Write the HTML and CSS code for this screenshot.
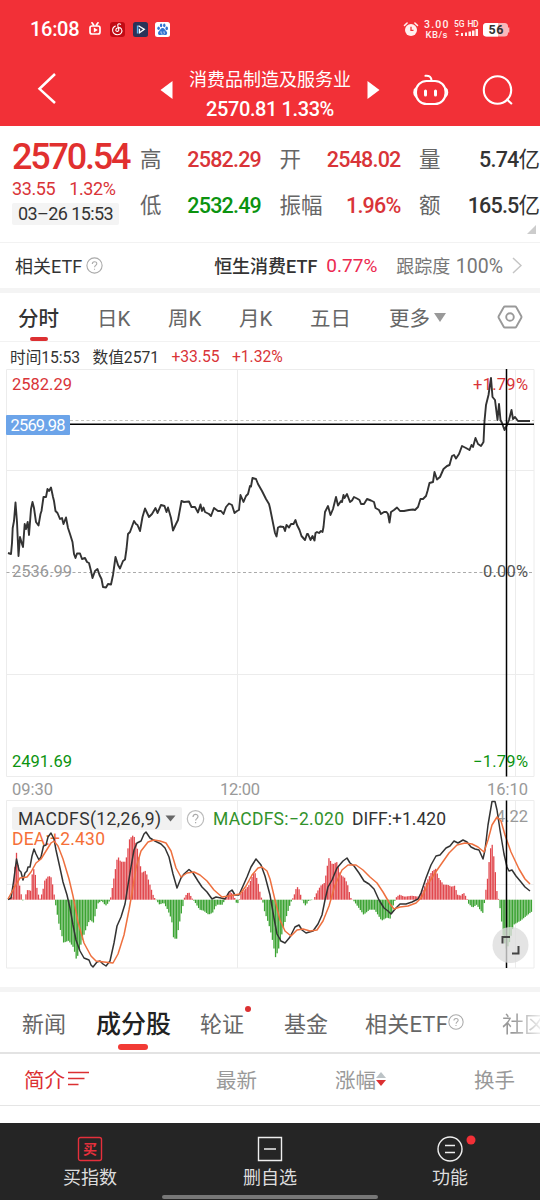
FILE: index.html
```html
<!DOCTYPE html>
<html lang="zh-CN">
<head>
<meta charset="utf-8">
<title>消费品制造及服务业</title>
<link rel="stylesheet" href="styles.css">
</head>
<body>
<main class="app">
  <header class="top">
    <div class="status">
      <span class="clock">16:08</span>
      <svg class="status-apps" width="90" height="18" viewBox="86 20 90 18">
        <g fill="none" stroke="#fff" stroke-width="1.7" stroke-linecap="round"><rect x="90" y="26" width="10" height="8" rx="2"/><path d="M92 22.8l1.6 2.2M98 22.8l-1.6 2.2"/></g>
        <path d="M93.8 27.6l4 2.4-4 2.4z" fill="#fff"/>
        <rect x="110" y="22" width="15" height="15" rx="3" fill="#c20b14"/>
        <path d="M120.6 24.2c-2-1-3.2 0-2.8 1.5l1 4.2c.3 1.8-3 2.2-3 0 0-2 3.7-3.3 5.4-1.2 2 2.8-.2 6-3.6 6-3.2 0-5-2.2-5-4.6 0-2 1.1-3.3 2.8-4" fill="none" stroke="#fff" stroke-width="1.1" stroke-linecap="round"/>
        <rect x="133" y="22" width="15" height="15" rx="2.5" fill="#2b3358"/>
        <path d="M137.6 25.5v8" stroke="#58b5f2" stroke-width="1.5"/><path d="M138.500 25.800l5.800 3.600-4.800 3.400v-4" fill="none" stroke="#fff" stroke-width="1.3"/>
        <rect x="155" y="22" width="15" height="15" rx="2.5" fill="#fff"/>
        <g fill="#3174d2"><ellipse cx="158.6" cy="28.2" rx="1.3" ry="1.8"/><ellipse cx="161.1" cy="25.4" rx="1.2" ry="1.8"/><ellipse cx="164.3" cy="25.4" rx="1.2" ry="1.8"/><ellipse cx="166.7" cy="28.4" rx="1.3" ry="1.8"/><path d="M162.6 28c2 0 2.3 2 3.7 3.2 1.7 1.6.7 4.2-1.5 3.7-1.5-.2-3-.2-4.4 0-2.300.5-3.200-2.100-1.500-3.700 1.400-1.200 1.700-3.200 3.700-3.200z"/></g>
        <path d="M161 31.200v2h1.300M164 31.200v2h1" fill="none" stroke="#fff" stroke-width=".6"/>
      </svg>
      <svg class="status-system" width="110" height="24" viewBox="402 17 110 24">
        <circle cx="411" cy="30" r="6" fill="#fff0ef"/><path d="M411 26.800v3.600h2.500" fill="none" stroke="#f23037" stroke-width="1.300"/><path d="M404.500 25.500l2.600-2.500M417.500 25.500l-2.600-2.500" stroke="#fff0ef" stroke-width="1.600" stroke-linecap="round"/>
        <g class="tiny"><text x="424" y="28" textLength="24.500" font-size="10.500">3.00</text><text x="425.500" y="38" textLength="22" font-size="9.500">KB/s</text><text x="454" y="26.500" textLength="10.500" font-size="8.500">5G</text><text x="467.500" y="26.500" textLength="11" font-size="8.500">HD</text></g>
        <path d="M455 32l2-2 2 2zM455 34l2 2 2-2zM461 33h2v3h-2zM465 32.500h2V36h-2zM468.500 31.500h2.500V36h-2.500zM472 30.500h2.500V36H472zM475.500 29h2.500v7h-2.500z" fill="#fff0ef"/>
        <rect x="483" y="23" width="25" height="13.500" rx="3.500" fill="#f9b9ba"/><path d="M486.500 23H498v13.500h-11.500a3.500 3.500 0 0 1-3.500-3.500v-6.500a3.500 3.500 0 0 1 3.500-3.500z" fill="#fff"/><path d="M508.600 27.500v5" stroke="#f9b9ba" stroke-width="1.500"/>
        <text class="battery" x="488.500" y="34.300" textLength="15" font-size="12.500">56</text>
      </svg>
    </div>
    <nav class="titlebar">
      <svg width="160" height="50" viewBox="20 65 160 50"><path d="M55 74L39.500 88.800 55 103" fill="none" stroke="#fff" stroke-width="2.500"/><path d="M172.500 81v18L160.500 90z" fill="#fff"/></svg>
      <div class="title"><div class="title-name">消费品制造及服务业</div><div class="title-value">2570.81 1.33%</div></div>
      <svg width="160" height="50" viewBox="360 65 160 50"><path d="M367.500 81v18l12-9z" fill="#fff"/><g fill="none" stroke="#fff" stroke-width="2.100" stroke-linecap="round"><rect x="416" y="81" width="29.500" height="23" rx="10.500"/><path d="M416 88.500c-2.300 1.300-2.300 6.500 0 8M445.500 88.500c2.300 1.300 2.300 6.500 0 8M431.500 80.500c0-3.500-2-5-6-4.700"/><path d="M425.500 91v4M435.500 91v4" stroke-width="3"/><circle cx="497.500" cy="90" r="13.700"/><path d="M507 99.500l4.300 4"/></g></svg>
    </nav>
  </header>

  <section class="quote">
    <div class="quote-main">
      <div class="last">2570.54</div>
      <div class="change"><span>33.55</span><span>1.32%</span></div>
      <div class="stamp">03–26 15:53</div>
    </div>
    <dl class="stats">
      <div><dt>高</dt><dd class="up">2582.29</dd></div>
      <div><dt>开</dt><dd class="up">2548.02</dd></div>
      <div><dt>量</dt><dd>5.74<i>亿</i></dd></div>
      <div><dt>低</dt><dd class="down">2532.49</dd></div>
      <div><dt>振幅</dt><dd class="up">1.96%</dd></div>
      <div><dt>额</dt><dd>165.5<i>亿</i></dd></div>
    </dl>
    <span class="corner"></span>
  </section>

  <section class="etf">
    <span class="etf-label">相关ETF</span>
    <svg class="help" width="17" height="17" viewBox="0 0 17 17"><circle cx="8.500" cy="8.500" r="7.600"/><path d="M6.300 7c0-3 4.500-3 4.500-.3 0 1.700-2.200 1.800-2.200 3.600M8.500 11.700v1.100"/></svg>
    <span class="etf-name">恒生消费ETF</span><span class="etf-rate">0.77%</span><span class="etf-track">跟踪度 <b>100%</b></span>
    <svg class="chevron" width="10" height="17" viewBox="0 0 10 17"><path d="M1 1l8 7.500L1 16"/></svg>
  </section>

  <nav class="periods">
    <span class="on">分时</span><span>日K</span><span>周K</span><span>月K</span><span>五日</span><span class="more">更多</span>
    <svg class="gear" width="26" height="24" viewBox="0 0 26 24"><path d="M8 1.500h10a1.500 1.500 0 0 1 1.300.8L24.200 11a2 2 0 0 1 0 2l-4.900 8.700a1.500 1.500 0 0 1-1.300.8H8a1.500 1.500 0 0 1-1.300-.8L1.800 13a2 2 0 0 1 0-2l4.900-8.700A1.500 1.500 0 0 1 8 1.500z"/><circle cx="13" cy="12" r="3.800"/></svg>
  </nav>

  <div class="readout"><span>时间15:53</span><span>数值2571</span><span class="up">+33.55</span><span class="up">+1.32%</span></div>

  <svg class="chart" width="540" height="431" viewBox="0 369 540 431">
    <path class="grid" d="M6.500 369.500h527.500v407H6.500zM6.500 470.500h527.500M6.500 674.500h527.500M237.500 369.500v407M515.500 369.500v407"/>
    <path class="dash" d="M6.500 572.500h527.500"/><path class="dash dim" d="M70 420.500h464"/>
    <text class="red" x="12" y="390" textLength="60">2582.29</text>
    <text class="red" x="473" y="390" textLength="55">+1.79%</text>
    <text class="gray" x="12" y="577" textLength="60">2536.99</text>
    <text class="ink" x="483" y="577" textLength="45">0.00%</text>
    <text class="green" x="12" y="767" textLength="60">2491.69</text>
    <text class="green" x="473" y="767" textLength="55">−1.79%</text>
    <text class="gray" x="12" y="795" textLength="41">09:30</text>
    <text class="gray" x="220" y="795" textLength="40">12:00</text>
    <text class="gray" x="487" y="795" textLength="41">16:10</text>
    <path id="price" class="line price"/>
    <path class="cross" d="M70 424.300h464M506.500 369v407.500"/>
    <rect x="6" y="415" width="64" height="20" rx="1" fill="#6ca4e9"/>
    <text x="10.500" y="431" textLength="55" fill="#fff">2569.98</text>
  </svg>

  <svg class="macd" width="540" height="187" viewBox="0 800 540 187">
    <path class="grid" d="M6.500 800.500h527.500v167.500H6.500zM6.500 884.500h527.500M237.500 800.500v167.500M515.500 800.500v167.500"/>
    <g id="bars"></g>
    <rect x="12" y="807" width="170" height="23" rx="2" fill="#f1f1f1"/>
    <g class="legend">
      <text x="18" y="825" textLength="143" fill="#333">MACDFS(12,26,9)</text>
      <path d="M165.500 815.500h10l-5 6z" fill="#666"/>
      <circle cx="195.500" cy="818.800" r="8.200" fill="none" stroke="#bbb" stroke-width="1.200"/><path d="M193 817c0-3.500 5-3.500 5-.4 0 2-2.400 2-2.400 4M195.600 822v1.300" fill="none" stroke="#aaa" stroke-width="1.200"/>
      <text x="213" y="825" textLength="131" fill="#32922b">MACDFS:−2.020</text>
      <text x="352" y="825" textLength="94" fill="#333">DIFF:+1.420</text>
      <text x="12" y="845" textLength="93" fill="#f56f38">DEA:+2.430</text>
    </g>
    <text class="gray scale" x="496" y="822" textLength="32">4.22</text>
    <path id="diff" class="line"/><path id="dea" class="line dea"/>
    <path class="cross" d="M506.500 800.500v167.500"/>
    <circle cx="510.500" cy="945" r="18" fill="#ddd" fill-opacity=".78"/><path d="M502.500 943.500V937h7.500M512 953.500h6.500V946" fill="none" stroke="#444" stroke-width="2"/>
  </svg>

  <nav class="sections">
    <span>新闻</span><span class="on">成分股</span><span class="dot">轮证</span><span>基金</span><span class="with-help">相关ETF<svg class="help" width="16" height="16" viewBox="0 0 17 17"><circle cx="8.500" cy="8.500" r="7.600"/><path d="M6.300 7c0-3 4.500-3 4.500-.3 0 1.700-2.200 1.800-2.200 3.600M8.500 11.700v1.100"/></svg></span><span class="fade">社区</span>
  </nav>

  <div class="columns">
    <span class="intro">简介<svg width="22" height="16" viewBox="0 0 22 16"><path d="M0 1.500h21M0 7.500h16.500M0 13.500h10.500"/></svg></span>
    <span>最新</span>
    <span class="sort">涨幅<svg width="10" height="16" viewBox="0 0 10 16"><path d="M0 7l5-6 5 6z" fill="#bcc3c6"/><path d="M0 9h10l-5 6z" fill="#db3032"/></svg></span>
    <span>换手</span>
  </div>

  <footer class="bottom">
    <div><svg width="26" height="26" viewBox="0 0 26 26"><rect x="1.500" y="1.500" width="23" height="23" rx="2" fill="none" stroke="#e5303c" stroke-width="1.400"/><text x="6" y="18" font-size="14" font-weight="700" fill="#e5303c">买</text></svg><span>买指数</span></div>
    <div><svg width="26" height="26" viewBox="0 0 26 26"><path d="M1.500 1.500h23v23h-23zM7 13h12" fill="none" stroke="#eee" stroke-width="1.400"/></svg><span>删自选</span></div>
    <div><svg class="func" width="26" height="26" viewBox="0 0 26 26"><circle cx="13" cy="13" r="12" fill="none" stroke="#eee" stroke-width="1.400"/><path d="M8 9.500h10M8 16.500h10" stroke="#eee" stroke-width="1.400"/><circle cx="34" cy="4" r="4.500" fill="#f23037"/></svg><span>功能</span></div>
    <i class="home"></i>
  </footer>
</main>
<script src="chart.js"></script>
</body>
</html>
```
FILE: styles.css
```css
* { box-sizing: border-box; }
body { margin: 0; background: #fff; color: #333; font-family: Roboto, "Noto Sans CJK SC", sans-serif; }
.app { width: 540px; height: 1200px; display: flex; flex-direction: column; overflow: hidden; }
.app > * { flex: none; }
svg { display: block; flex: none; }
span, dt, dd, .title, .last, .change, .stamp { white-space: nowrap; }
.up { color: #d93438; }
.down { color: #0b930f; }

.top { height: 126px; background: #f23037; color: #fff; }
.status { height: 60px; display: flex; align-items: center; padding: 0 28px 0 30px; }
.clock { width: 56px; font-size: 20px; font-weight: 500; letter-spacing: -.3px; margin-top: -2px; }
.status-apps { margin-top: -2px; }
.status-system { margin-left: auto; margin-top: -2px; }
.tiny { fill: #fff0ef; font-weight: 500; }
.battery { fill: #333; font-weight: 700; }
.titlebar { height: 66px; display: flex; justify-content: space-between; align-items: flex-start; padding: 5px 20px 0; }
.title { text-align: center; padding-top: 3px; }
.title-name { font-size: 18px; line-height: 24px; }
.title-value { font-size: 20px; line-height: 24px; margin-top: 5px; letter-spacing: -.4px; font-weight: 500; }

.quote { position: relative; height: 117px; display: flex; border-bottom: 1px solid #f2f2f2; }
.quote-main { width: 140px; padding: 12px 0 0 12px; }
.last { font-size: 36px; line-height: 38px; font-weight: 500; letter-spacing: -2.200px; color: #e1302f; }
.change { display: flex; gap: 14px; margin-top: 3px; font-size: 18px; line-height: 20px; letter-spacing: -.4px; color: #d93438; }
.stamp { width: 107px; height: 22px; margin-top: 4px; background: #f4f4f4; font-size: 18px; line-height: 22px; text-align: center; letter-spacing: -.6px; border-radius: 2px; }
.stats { display: grid; grid-template-columns: 121px 121px 121px; grid-template-rows: 46px 46px; column-gap: 18.500px; margin: 11px 0 0; }
.stats div { display: flex; justify-content: space-between; align-items: center; }
.stats dt { font-size: 21.500px; line-height: 30px; margin-top: -1px; color: #666; }
.stats dd { margin: 0; font-size: 21.500px; line-height: 30px; font-weight: 500; letter-spacing: -.8px; }
.stats i { font-style: normal; font-size: 21.500px; letter-spacing: 0; font-weight: 400; }
.corner { position: absolute; right: 4px; bottom: 8px; border-left: 9px solid transparent; border-bottom: 9px solid #ccc; }

.etf { height: 50px; display: flex; align-items: center; padding: 0 18px 0 15px; border-bottom: 5px solid #f4f4f4; font-size: 18px; }
.etf span { margin-top: -1px; }
.etf-label { width: 71px; }
.help { fill: none; stroke: #aaa; stroke-width: 1.100; }
.etf .etf-name { margin-left: auto; font-weight: 500; }
.etf-rate { width: 53px; margin-left: 9px; color: #ec2950; font-size: 19px; }
.etf-track { margin-left: 17px; color: #777; }
.etf-track b { font-weight: 400; font-size: 19.500px; margin-left: 1px; }
.chevron { margin-left: 9px; fill: none; stroke: #c5c5c5; stroke-width: 1.500; }

.periods { height: 49px; display: grid; grid-template-columns: 79px 71px 71px 71px 79px 108px 26px; align-items: center; padding-left: 18px; border-bottom: 1px solid #f2f2f2; color: #666; font-size: 20.500px; }
.periods span { position: relative; }
.periods .on { color: #333; font-weight: 500; }
.periods .on::after { content: ""; position: absolute; left: 12px; bottom: -9px; width: 18px; height: 4px; border-radius: 3px; background: #dc3032; }
.more { display: flex; align-items: center; gap: 4px; }
.more::after { content: ""; border: 6px solid transparent; border-top: 9px solid #999; border-bottom: 0; }
.gear { fill: none; stroke: #999; stroke-width: 1.900; }
.readout { height: 27px; display: flex; align-items: center; gap: 12.500px; padding: 1px 0 0 10px; font-size: 15.700px; letter-spacing: -.05px; }

.chart text, .scale { font-size: 16.500px; }
.grid { fill: none; stroke: #ececec; stroke-width: 1; }
.dash { fill: none; stroke: #aaa; stroke-width: 1.200; stroke-dasharray: 3 2.500; }
.dim { stroke: #c5c5bf; }
.red { fill: #d93438; }
.green { fill: #0b930f; }
.ink { fill: #555; }
.gray { fill: #999; }
.line { fill: none; stroke: #333; stroke-width: 1.500; stroke-linejoin: round; }
.price { stroke-width: 1.900; }
.dea { stroke: #ee703f; }
.cross { fill: none; stroke: #000; stroke-width: 1.500; }
.legend { font-size: 17.500px; }
.bar-up { fill: #e1474d; }
.bar-down { fill: #3ba332; }

.sections { height: 67px; display: flex; align-items: center; padding: 0 0 0 22px; border-top: 5px solid #f4f4f4; border-bottom: 2px solid #e3e3e3; color: #666; font-size: 22px; overflow: hidden; }
.sections span { position: relative; flex: none; margin-right: 30px; }
.sections .on { color: #222; font-size: 25px; font-weight: 500; margin-right: 29px; }
.sections .on::after { content: ""; position: absolute; left: 22px; bottom: -10px; width: 30px; height: 6px; border-radius: 3px; background: #f23b35; }
.dot { width: 54px; }
.dot::after { content: ""; position: absolute; left: 45px; top: 0; width: 6px; height: 6px; border-radius: 50%; background: #db3032; }
.sections .with-help { display: flex; align-items: center; margin: 0 38px 0 7px; letter-spacing: .2px; }
.sections .fade { margin: 0; color: transparent; background: linear-gradient(90deg, #999 25%, #fff 100%); background-clip: text; -webkit-background-clip: text; }
.columns { height: 52px; display: grid; grid-template-columns: 192px 119px 139px 1fr; align-items: center; padding: 0 0 1px 24px; border-bottom: 1px solid #e5e5e5; font-size: 20.500px; color: #999; }
.columns span { display: flex; align-items: center; }
.columns .intro { color: #db3032; gap: 3px; }
.intro path { stroke: #db3032; stroke-width: 1.500; }
.bottom { position: relative; height: 77px; margin-top: 17px; padding-top: 13px; display: grid; grid-template-columns: 1fr 1fr 1fr; background: #252525; color: #ddd; font-size: 18px; }
.bottom div { display: flex; flex-direction: column; align-items: center; line-height: 24px; gap: 4px; }
.func { overflow: visible; }
.home { position: absolute; left: 162px; bottom: 1px; width: 216px; height: 4px; border-radius: 2px; background: #777; }
```
FILE: chart.js
```js
const series = {
  price: "8,553 11,554 12,543 12.7,528 14,521 15.5,502.5 17,522 18.5,556 20,537 22,544 23,547 24.7,524 26,529 27.7,522 29,535 31,509 32.5,502 34,508 36,522 38.5,525.5 40.5,514 41.5,511 43.5,497 46,497 47.5,489 49,491 51,487.5 53,497 54,501 55.5,511 57.5,513 60,519 62,518 63.5,524 66,517.5 68,528 70,534 72.5,542 74,554 75.5,558 77,553.5 80,553.5 82,559 85,558 87,562 89,563 91,571 92.5,578 95,571 97.5,569 99.5,575 101.5,579 103,587 106,587.5 108,584 111,584.5 113,575 115.5,557 118,565 120,568.5 123,561 125,559.5 126.5,549 128,534 130,532 134,521 136,524 137.5,525 140,531 142.5,517 145,508.5 149,517 152,514 155.5,508 157.5,513 161,505 164.5,506 166.5,512 168,507.5 171,518 173,530.5 176,524 178,520 181.5,501 184,502 189,501.5 191.5,507 195,507 198,512.5 200.5,504.5 202,511 203.5,507.5 205,512 209,514 211,516 214,508 218,511 221,511 223.5,514 226,507 229,503.5 232,505 234.5,513 237,511 239,510 240.5,495 243.5,502 246,496 248,494 250,486 251,486.5 252.5,478 256,479 258,484 262,491 266,499 269,504 270,508 273,523 275,533 276.5,536.5 278,527.5 280,526.5 283.5,527 285,531 286.5,525 289,527.5 291,524 293.5,524 295.5,520 297,525 299.5,530 301.5,536 305,540 307,534 308,534 310.5,540 312.5,536 314.5,540.5 315.5,533 317,532 319,533 321,531 322.5,532 323.5,527 325,512 328,506 330.5,515 333,509 336,497 338,505.5 341,501 342,502 343.5,495 344.5,498 347,494 350,502 352,500.5 354,497 357,498.5 359.5,500 361,504 364,504 367,499 371,500.5 374,502 375.5,508 379,510 381,514 384,512 386.5,512 388,514 389.5,522.5 391,512 394,510 397,507.5 400,511 404,511 409,510 413,509.5 415,510 418,507 420.5,499 423,499 426,496 427.5,491 429.5,483 433,482 434.5,472 437,479.5 440,477 443.5,469 447,466 449.5,465 452,456 454,455 456,458.5 459,454 462,446 466,448 469.5,450 471.5,445 473,447 475.5,438 478,444 481,446 483.5,442 484.5,421 486,405 488.5,395 491,378 492.5,397 495,400 496,408 497.5,420 499,404 500.5,420 502,423 504.5,430 507,425 509,420 511.5,410 513,419 515,417 518,421 530,421",
  diff: "8,899.5 11,898 13.5,882 16.5,859 19,870 21,872 23,880 25,873 27,871 28,867 30,867 32,856 34,849 36,854 39,860 41,857 43.5,846 46,845 48,837 51,833 54,839 56,850 60,868 63,882 67,895 70,908 73,925 76,940 80,951 84,958 89,960 91,965 93,967 97,962 100,961 103,964 106,966 110,961 114,943 117,926 121,917 125,904 128,885 131,867 134,850 137,843 141,841 144,834 146,832 150,838 155,841 161,844 165,848 169,857 173,874 177,888 181,878 184,874 189,869.5 193,873 198,881 202,887 207,892 212,899 216,897 221,898 225,899 229,892 232,890 235,895 239,895 243,886 247,877 251,867 256,859 261,865 265,876 270,895 274,918 277,934 281,941 285,943 290,937 295,927 299,925 302,930 306,933 313,931 318,924 322,915 325,900 328,887 332,880 337,868 343,861 347,858 350,863 354,866 359,873 364,881 369,884 374,889 379,900 384,908 388,911 391,914 396,908 400,904 406,904 412,902 418,899 421,893 426,878 431,865 436,856 440,855 446,848 450,846 454,841 458,843 463,840 467,842 471,847 475,849 479,850 483,859 485,850 488,825 492,801.5 495,801.5 497,810 500,830 504,854 507,867 509,871 512,870 516,876 521,882 525,887 530,891",
  dea: "8,899 14,888 20,878 27,877 31,872 36,863 41,859 46,851 51,843 54,841 58,846 63,859 69,879 73,896 78,922 84,943 91,956 96,961 104,962 113,963 118,954 124,935 129,910 132,893 136,868 141,851 148,842 154,840 160,841 166,843 171,851 176,868 181,877 187,873 194,872 200,875 207,881 214,890 222,897 229,896 234,895 240,894 246,886 252,875 258,868 262,867 267,871 270,879 275,900 280,920 285,931 291,936 297,930 303,929 310,931 317,930 323,921 329,906 335,885 342,870 348,865 356,865 363,870 370,877 377,883 383,892 390,904 394,909 400,907 408,906 416,903 422,897 428,884 435,873 442,863 449,853 457,845 465,843 472,844 478,847 484,852 488,840 492,825 497,817 501,821 505,835 511,852 519,869 525,879 530,884"
};
for (const id in series) document.getElementById(id).setAttribute("d", "M" + series[id]);

// Histogram heights by x position; positive values rise above the zero line.
const histogram = "8,1 11,2 13,16 15.5,49 17,40 19,14 21,3 22,0 23,-5 24,2 27,10 30,9 32,30 34,31 36,13 39,0 42,8 44,19 48,24 51,22 53,8 54.5,0 55,-5 58,-23 63,-43 68,-41 73,-48 76,-61 78,-52 84,-33 89,-20 93,-23 97,-4 101,-1 105,-6 108,-3 110,2 113,20 117,44 120,38 125,38 129,61 133,65 137,50 141,27 145,29 149,16 153,3 156,-1 159,-5 163,-3 167,-10 171,-20 173,-39 176,-39 180,-17 183,-3 184,3 188,8 191,2 194,-2 199,-10 203,-11 208,-15 212,-13 216,-5 222,-5 225,2 229,8 233,5 235,-1 236,-4 238,-3 240,6 244,10 248,14 251,22 254,28 257,19 260,4 262,-1 264,-12 268,-24 271,-36 275,-58 278,-49 282,-31 286,-16 290,-3 292,1 294,6 296,13 298,12 300,5 302,-2 305,-6 308,-1 313,0 316,7 320,14 324,17 328,42 332,35 336,38 340,25 344,22 347,15 350,2 353,-1 358,-8 363,-15 369,-10 374,-10 381,-21 386,-18 390,-19 393,-4 396,3 399,5 404,3 411,4 418,3 422,9 427,20 431,28 435,31 438,22 443,15 447,15 451,13 454,14 457,5 460,4 463,7 466,2 468,-4 472,-8 476,-5 480,-11 483,-14 484,1 487,22 489,44 491,59 494,37 496,10 498,0 499,-5 501,-22 503,-40 506,-50 509,-42 513,-25 520,-21 526,-16 531,-12"
  .split(" ").map(p => p.split(",").map(Number));
const zero = 899.7, step = 1.57;
const bars = document.getElementById("bars");
for (let x = 8, i = 0; x < 531; x += step) {
  while (histogram[i + 1][0] < x) i++;
  const [x0, h0] = histogram[i], [x1, h1] = histogram[i + 1];
  const h = h0 + (h1 - h0) * (x - x0) / (x1 - x0);
  const r = document.createElementNS("http://www.w3.org/2000/svg", "rect");
  r.setAttribute("x", x.toFixed(2));
  r.setAttribute("y", h > 0 ? zero - h : zero);
  r.setAttribute("width", 1.3);
  r.setAttribute("height", Math.abs(h));
  r.setAttribute("class", h > 0 ? "bar-up" : "bar-down");
  bars.append(r);
}
```
